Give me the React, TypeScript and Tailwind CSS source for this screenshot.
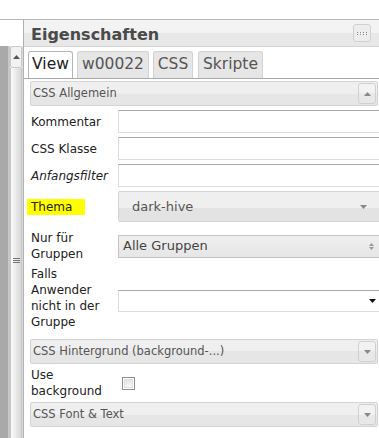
import React from 'react'

const FONT = "font-['DejaVu_Sans',Verdana,sans-serif]"

function Tri({ dir = 'down', color = '#888', w = 7, h = 4 }: { dir?: 'up' | 'down'; color?: string; w?: number; h?: number }) {
  const pts = dir === 'down' ? `0,0 ${w},0 ${w / 2},${h}` : `0,${h} ${w},${h} ${w / 2},0`
  return (
    <svg width={w} height={h} viewBox={`0 0 ${w} ${h}`} className="block">
      <polygon points={pts} fill={color} />
    </svg>
  )
}

function Section({ title, up }: { title: string; up?: boolean }) {
  return (
    <div className="flex h-[25px] items-center justify-between rounded-[2px] border border-[#d3d3d3] bg-[linear-gradient(#efefef_50%,#e6e6e6_50%)] pl-[2px] pr-[1px]">
      <span className="text-[11.5px] text-[#555]">{title}</span>
      <div className="flex h-[21px] w-[18px] items-center justify-center rounded-[3px] border border-[#d0d0d0] bg-[linear-gradient(#f2f2f2_50%,#e8e8e8_50%)]">
        <Tri dir={up ? 'up' : 'down'} />
      </div>
    </div>
  )
}

function Row({ label, children, className = 'mt-[4px]' }: { label: React.ReactNode; children?: React.ReactNode; className?: string }) {
  return (
    <div className={`flex items-center ${className}`}>
      <div className="w-[88px] shrink-0 pl-[1px] text-[12px] leading-[16px] text-[#222]">{label}</div>
      {children}
    </div>
  )
}

function TextInput() {
  return <div className="h-[23px] w-[270px] shrink-0 border border-[#dcdcdc] border-t-[#a9a9a9] bg-white" />
}

const TABS = [
  { label: 'View', w: 'w-[45px]', active: true },
  { label: 'w00022', w: 'w-[72px]' },
  { label: 'CSS', w: 'w-[40px]' },
  { label: 'Skripte', w: 'w-[65px] ml-[1px]' },
]

export default function App() {
  return (
    <div className={`flex h-[438px] w-[379px] flex-col overflow-hidden bg-white ${FONT}`}>
      <div className="h-[19px] shrink-0 border-b border-[#b8b8b8] box-content" />

      <div className="flex min-h-0 flex-1">
        {/* left splitter / scrollbar */}
        <div className="flex w-[23px] shrink-0 flex-col">
          <div className="h-[26px] shrink-0 bg-white" />
          <div className="flex flex-1">
            <div className="w-[8px] bg-[#a9a9a9]" />
            <div className="w-[2px] bg-[#c8c8c8]" />
            <div className="flex w-[12px] flex-col">
              <div className="flex h-[22px] items-center justify-center rounded-[2px] border border-[#c8c8c8] bg-[#f2f2f2]">
                <Tri dir="up" color="#555" w={7} h={4} />
              </div>
              <div className="flex flex-1 flex-col items-center justify-center border-x border-[#c4c4c4] bg-[linear-gradient(to_right,#fbfbfb,#d8d8d8)]">
                <div className="mb-[-14px] flex flex-col gap-[1px]">
                  <div className="h-[1px] w-[7px] bg-[#777]" />
                  <div className="h-[1px] w-[7px] bg-[#777]" />
                  <div className="h-[1px] w-[7px] bg-[#777]" />
                </div>
              </div>
            </div>
            <div className="w-[1px] bg-[#dcdcdc]" />
          </div>
        </div>

        {/* property panel */}
        <div className="flex min-w-0 flex-1 flex-col border-l border-[#b0b0b0]">
          <div className="flex h-[27px] shrink-0 items-center justify-between border-b border-[#d3d3d3] bg-[linear-gradient(#f3f3f3_50%,#e8e8e8_50%)] pl-[7px] pr-[8px]">
            <span className="pt-[3px] text-[16px] font-bold text-[#4a4a4a]">Eigenschaften</span>
            <div className="flex h-[18px] w-[18px] items-center justify-center rounded-[3px] border border-[#d0d0d0] bg-[#ededed]">
              <svg width="10" height="3" viewBox="0 0 10 3" className="block">
                {[0, 3, 6, 9].map((x) => (
                  <g key={x}>
                    <rect x={x} y={0} width={1} height={1} fill="#888" />
                    <rect x={x} y={2} width={1} height={1} fill="#888" />
                  </g>
                ))}
              </svg>
            </div>
          </div>

          <div className="flex shrink-0 gap-[4px] border-b border-[#aaa] pl-[4px] pt-[4px]">
            {TABS.map((t) => (
              <div
                key={t.label}
                className={`flex h-[27px] items-center justify-center rounded-t-[3px] border border-b-0 text-[15.5px] ${t.w} ${
                  t.active ? 'border-[#b5b5b5] bg-white text-[#212121]' : 'border-[#d3d3d3] bg-[#e6e6e6] text-[#555]'
                }`}
              >
                {t.label}
              </div>
            ))}
          </div>

          <div className="flex flex-col pl-[6px] pr-[1px] pt-[2px]">
            <Section title="CSS Allgemein" up />

            <Row label="Kommentar">
              <TextInput />
            </Row>
            <Row label="CSS Klasse">
              <TextInput />
            </Row>
            <Row label={<i>Anfangsfilter</i>}>
              <TextInput />
            </Row>
            <Row label={<span className="-ml-[4px] inline-block bg-[#ffff00] pl-[4px] pr-[13px]">Thema</span>}>
              <div className="flex h-[31px] w-[263px] shrink-0 items-center justify-between rounded-[2px] border border-[#d3d3d3] bg-[linear-gradient(#efefef_55%,#e3e3e3_55%)] pl-[13px] pr-[13px] text-[13px] text-[#555]">
                <span>dark-hive</span>
                <Tri color="#888" w={7} h={4} />
              </div>
            </Row>
            <Row label="Nur für Gruppen" className="mt-[8px]">
              <div className="flex h-[23px] w-[262px] shrink-0 items-center justify-between border border-[#c4c4c4] bg-[linear-gradient(#efefef,#e6e6e6)] pl-[4px] pr-[5px] text-[13px] text-[#444]">
                <span>Alle Gruppen</span>
                <div className="flex flex-col gap-[1px]">
                  <Tri dir="up" color="#999" w={5} h={3} />
                  <Tri color="#999" w={5} h={3} />
                </div>
              </div>
            </Row>
            <Row label="Falls Anwender nicht in der Gruppe">
              <div className="mt-[5px] flex h-[22px] w-[265px] shrink-0 items-center justify-end border border-[#dcdcdc] border-t-[#a9a9a9] bg-white pr-[6px]">
                <Tri color="#111" w={7} h={4} />
              </div>
            </Row>

            <div className="mt-[9px]">
              <Section title="CSS Hintergrund (background-...)" />
            </div>

            <Row label="Use background" className="mt-[3px]">
              <div className="ml-[4px] flex h-[13px] w-[13px] items-center justify-center border border-[#8f8f8f] bg-white">
                <div className="h-[9px] w-[9px] border border-[#e0e0e0] bg-[linear-gradient(#e4e4e4,#f8f8f8)]" />
              </div>
            </Row>

            <div className="mt-[3px]">
              <Section title="CSS Font & Text" />
            </div>
          </div>
        </div>
      </div>
    </div>
  )
}
